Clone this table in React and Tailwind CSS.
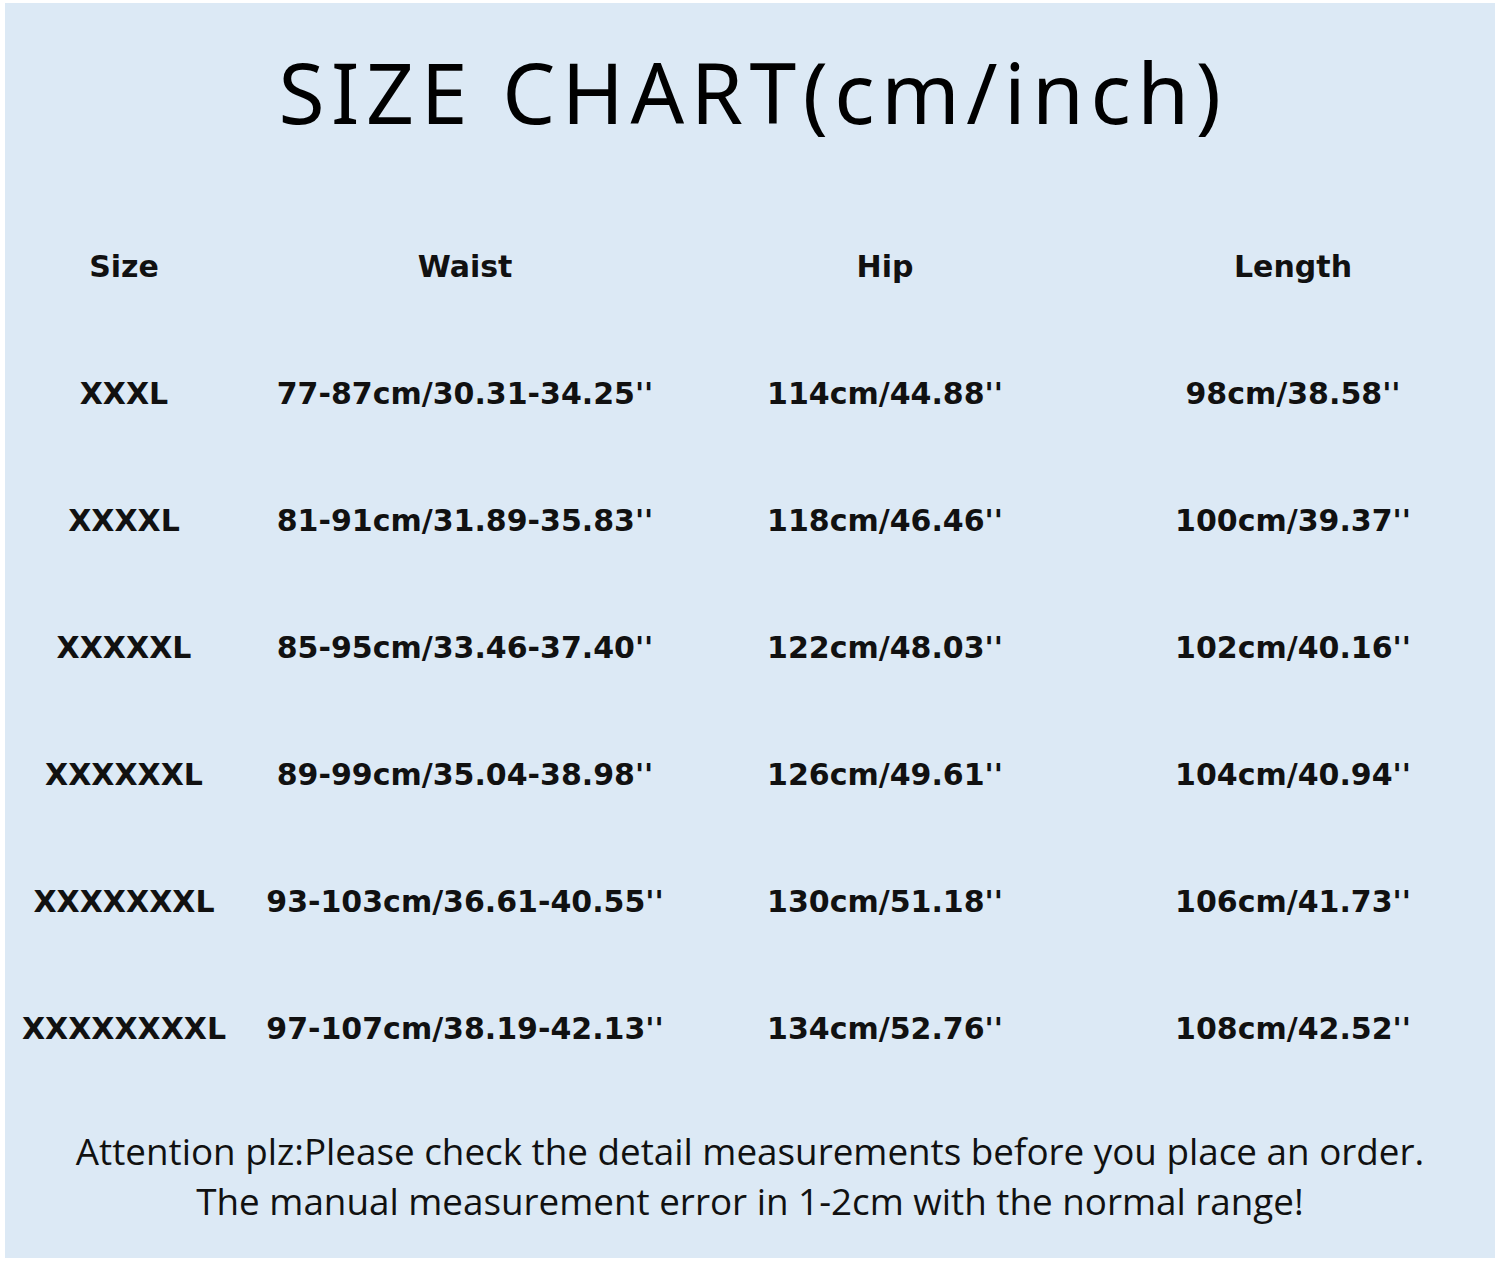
const headers = ["Size", "Waist", "Hip", "Length"];

const rows = [
  ["XXXL", "77-87cm/30.31-34.25''", "114cm/44.88''", "98cm/38.58''"],
  ["XXXXL", "81-91cm/31.89-35.83''", "118cm/46.46''", "100cm/39.37''"],
  ["XXXXXL", "85-95cm/33.46-37.40''", "122cm/48.03''", "102cm/40.16''"],
  ["XXXXXXL", "89-99cm/35.04-38.98''", "126cm/49.61''", "104cm/40.94''"],
  ["XXXXXXXL", "93-103cm/36.61-40.55''", "130cm/51.18''", "106cm/41.73''"],
  ["XXXXXXXXL", "97-107cm/38.19-42.13''", "134cm/52.76''", "108cm/42.52''"],
];

function Row({ cells }) {
  return (
    <div className="grid grid-cols-[238px_444px_396px_1fr] h-[127px] items-center text-center">
      {cells.map((c, i) => (
        <span key={i} className={i === 3 ? "whitespace-nowrap pl-2" : "whitespace-nowrap"}>
          {c}
        </span>
      ))}
    </div>
  );
}

export default function App() {
  return (
    <div className="w-[1500px] h-[1264px] bg-white pl-[5px] pr-[5px] pt-[3px] pb-[6px]">
      <div className="h-full bg-[#dce9f5] flex flex-col">
        <div className="h-[200px] flex items-center justify-center pb-[22px]">
          <h1 className="font-['Noto_Sans',sans-serif] text-[84px] leading-none text-black tracking-[6.5px] pl-[6px]">
            SIZE CHART(cm/inch)
          </h1>
        </div>
        <div className="font-['DejaVu_Sans',sans-serif] font-bold text-[30px] text-[#111]">
          <Row cells={headers} />
          {rows.map((r) => (
            <Row key={r[0]} cells={r} />
          ))}
        </div>
        <div className="mt-[34px] font-['Open_Sans',sans-serif] text-[36.8px] leading-[50px] text-[#111] text-center">
          <p>Attention plz:Please check the detail measurements before you place an order.</p>
          <p>The manual measurement error in 1-2cm with the normal range!</p>
        </div>
      </div>
    </div>
  );
}
